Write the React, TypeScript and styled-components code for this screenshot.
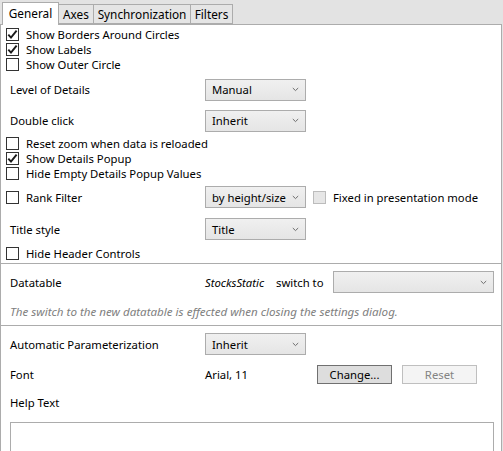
import React from 'react';
import styled, { createGlobalStyle } from 'styled-components';

const GlobalStyle = createGlobalStyle`
  body {
    margin: 0;
    font-family: "Noto Sans", "Open Sans", sans-serif;
    font-size: 11.3px;
    line-height: 15px;
    color: #000;
  }
`

const Window = styled.div`
  width: 503px;
  height: 451px;
  overflow: hidden;
  background: #e3e3e3;
  display: flex;
  flex-direction: column;
`

const TabStrip = styled.div`
  height: 24px;
  display: flex;
  align-items: flex-end;
  padding-left: 2px;
  flex-shrink: 0;
`

const Tab = styled.div<{ $active?: boolean; $w: number }>`
  box-sizing: border-box;
  width: ${p => p.$w}px;
  height: ${p => (p.$active ? 23 : 20)}px;
  margin-bottom: ${p => (p.$active ? -1 : 0)}px;
  margin-right: -1px;
  position: relative;
  z-index: ${p => (p.$active ? 2 : 1)};
  border: 1px solid #acacac;
  border-bottom: ${p => (p.$active ? 'none' : '1px solid #acacac')};
  background: ${p => (p.$active ? '#fff' : '#e5e5e5')};
  display: flex;
  align-items: center;
  justify-content: center;
  padding-bottom: ${p => (p.$active ? 2 : 0)}px;
  font-size: 11.8px;
  white-space: nowrap;
`

const Panel = styled.div`
  flex: 1;
  width: 502px;
  box-sizing: border-box;
  border: 1px solid #acacac;
  border-bottom: none;
  background: #fff;
  display: flex;
  flex-direction: column;
`

const Section = styled.div<{ $top?: number }>`
  padding: ${p => p.$top ?? 0}px 0 0 5px;
  display: flex;
  flex-direction: column;
`

const Separator = styled.div<{ $top: number }>`
  height: 1px;
  margin-top: ${p => p.$top}px;
  background: #acacac;
`

const CheckRow = styled.label<{ $h?: number }>`
  height: ${p => p.$h ?? 15}px;
  display: flex;
  align-items: center;
  gap: 7px;
  white-space: nowrap;
`

const Box = styled.span<{ $disabled?: boolean }>`
  box-sizing: border-box;
  width: 13px;
  height: 13px;
  flex-shrink: 0;
  border: 1px solid ${p => (p.$disabled ? '#bcbcbc' : '#333')};
  background: ${p => (p.$disabled ? '#e6e6e6' : '#fff')};
  display: flex;
  align-items: center;
  justify-content: center;
`

const FieldRow = styled.div<{ $h: number; $top?: number }>`
  height: ${p => p.$h}px;
  margin-top: ${p => p.$top ?? 0}px;
  display: grid;
  grid-template-columns: 199px auto 1fr;
  align-items: center;
  white-space: nowrap;
`

const Label = styled.span`
  padding-left: 4px;
`

const CheckLabelCell = styled.div`
  display: flex;
  align-items: center;
  gap: 7px;
`

const Combo = styled.div<{ $w?: number }>`
  box-sizing: border-box;
  width: ${p => p.$w ?? 101}px;
  height: 22px;
  border: 1px solid #acacac;
  background: linear-gradient(#f0f0f0, #e5e5e5);
  display: flex;
  align-items: center;
  justify-content: space-between;
  padding: 0 6px 0 6px;
`

const Inline = styled.div<{ $gap: number }>`
  display: flex;
  align-items: center;
  gap: ${p => p.$gap}px;
`

const Value = styled.span<{ $w: number; $italic?: boolean }>`
  width: ${p => p.$w}px;
  font-style: ${p => (p.$italic ? 'italic' : 'normal')};
`

const Note = styled.div`
  height: 22px;
  display: flex;
  align-items: center;
  padding-left: 4px;
  font-style: italic;
  font-size: 11.6px;
  color: #808080;
  white-space: nowrap;
`

const Buttons = styled.div`
  display: flex;
  gap: 10px;
`

const Button = styled.div<{ $disabled?: boolean }>`
  box-sizing: border-box;
  width: 75px;
  height: 19px;
  border: 1px solid ${p => (p.$disabled ? '#bfbfbf' : '#707070')};
  background: ${p => (p.$disabled ? '#f4f4f4' : '#dddddd')};
  color: ${p => (p.$disabled ? '#838383' : '#000')};
  display: flex;
  align-items: center;
  justify-content: center;
`

const TextArea = styled.div`
  box-sizing: border-box;
  margin: 5px 0 0 4px;
  width: 484px;
  height: 40px;
  border: 1px solid #acacac;
  background: #fff;
`

const Check = () => (
  <svg width="11" height="11" viewBox="0 0 11 11">
    <path d="M1.3 5.6 L4 8.6 L9.6 1.6" fill="none" stroke="#1a1a1a" strokeWidth="1.9" />
  </svg>
)

const Chevron = () => (
  <svg width="7" height="5" viewBox="0 0 7 5">
    <path d="M0.8 1 L3.5 3.6 L6.2 1" fill="none" stroke="#6d6d6d" strokeWidth="1" />
  </svg>
)

const CheckBox: React.FC<{ checked?: boolean; disabled?: boolean }> = ({ checked, disabled }) => (
  <Box $disabled={disabled}>{checked && <Check />}</Box>
)

const Select: React.FC<{ value?: string; w?: number }> = ({ value, w }) => (
  <Combo $w={w}>
    <span>{value}</span>
    <Chevron />
  </Combo>
)

const App: React.FC = () => {
  const tabs = [
    { name: 'General', w: 57 },
    { name: 'Axes', w: 36 },
    { name: 'Synchronization', w: 98 },
    { name: 'Filters', w: 43 },
  ]

  return (
    <>
      <GlobalStyle />
      <Window>
        <TabStrip>
          {tabs.map((t, i) => (
            <Tab key={t.name} $active={i === 0} $w={t.w}>{t.name}</Tab>
          ))}
        </TabStrip>
        <Panel>
          <Section $top={2}>
            <CheckRow><CheckBox checked />Show Borders Around Circles</CheckRow>
            <CheckRow><CheckBox checked />Show Labels</CheckRow>
            <CheckRow><CheckBox />Show Outer Circle</CheckRow>
            <FieldRow $h={31} $top={2}>
              <Label>Level of Details</Label>
              <Select value="Manual" />
            </FieldRow>
            <FieldRow $h={31}>
              <Label>Double click</Label>
              <Select value="Inherit" />
            </FieldRow>
            <CheckRow><CheckBox />Reset zoom when data is reloaded</CheckRow>
            <CheckRow><CheckBox checked />Show Details Popup</CheckRow>
            <CheckRow><CheckBox />Hide Empty Details Popup Values</CheckRow>
            <FieldRow $h={32}>
              <CheckLabelCell><CheckBox />Rank Filter</CheckLabelCell>
              <Inline $gap={7}>
                <Select value="by height/size" />
                <CheckBox disabled />
                <span>Fixed in presentation mode</span>
              </Inline>
            </FieldRow>
            <FieldRow $h={32}>
              <Label>Title style</Label>
              <Select value="Title" />
            </FieldRow>
            <CheckRow $h={16}><CheckBox />Hide Header Controls</CheckRow>
          </Section>
          <Separator $top={2} />
          <Section>
            <FieldRow $h={36}>
              <Label>Datatable</Label>
              <Inline $gap={0}>
                <Value $w={71} $italic>StocksStatic</Value>
                <Value $w={57}>switch to</Value>
                <Select w={161} />
              </Inline>
            </FieldRow>
            <Note>The switch to the new datatable is effected when closing the settings dialog.</Note>
          </Section>
          <Separator $top={3} />
          <Section>
            <FieldRow $h={36}>
              <Label>Automatic Parameterization</Label>
              <Select value="Inherit" />
            </FieldRow>
            <FieldRow $h={25}>
              <Label>Font</Label>
              <Inline $gap={0}>
                <Value $w={112}>Arial, 11</Value>
                <Buttons>
                  <Button>Change...</Button>
                  <Button $disabled>Reset</Button>
                </Buttons>
              </Inline>
            </FieldRow>
            <FieldRow $h={30}>
              <Label>Help Text</Label>
            </FieldRow>
            <TextArea />
          </Section>
        </Panel>
      </Window>
    </>
  )
}

export default App;
